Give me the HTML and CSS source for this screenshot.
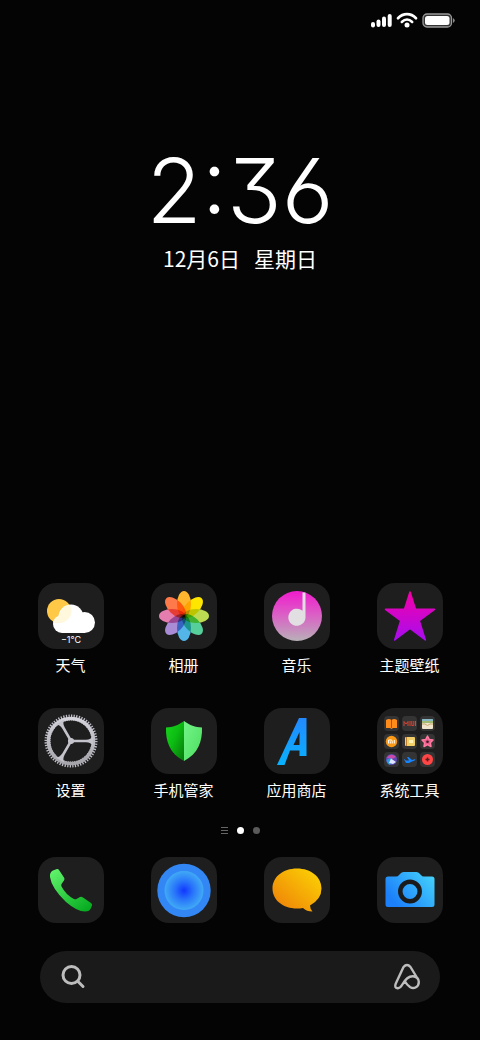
FILE: index.html
```
<!DOCTYPE html>
<html lang="zh-CN">
<head>
<meta charset="utf-8">
<meta name="viewport" content="width=device-width, initial-scale=1">
<title>主屏幕</title>
<link rel="stylesheet" href="styles.css">
</head>
<body>
<div class="screen">
  <header class="status-bar">
    <svg class="status-signal" viewBox="0 0 22 16" aria-hidden="true">
      <rect x="1" y="10" width="4" height="5.500" rx="2"/>
      <rect x="6.500" y="7.500" width="4" height="7.500" rx="2"/>
      <rect x="12" y="4.500" width="4" height="10.500" rx="2"/>
      <rect x="17.700" y="2" width="4" height="13" rx="2"/>
    </svg>
    <svg class="status-wifi" viewBox="0 0 22 16" aria-hidden="true">
      <path d="M2 6.2C7.2 .8 14.8 .8 20 6.2" stroke-width="2.7"/>
      <path d="M5.8 10C9 6.8 13 6.8 16.200 10" stroke-width="2.500"/>
      <circle cx="11" cy="13" r="2.500"/>
    </svg>
    <svg class="status-battery" viewBox="0 0 34 16" aria-hidden="true">
      <rect x="1" y="2" width="28.500" height="13" rx="4" fill="#333" stroke="#999" stroke-width="1.300"/>
      <rect x="3" y="4" width="24.500" height="9" rx="2.500" fill="#fff"/>
      <path d="M31 6q3.500 2.500 0 5z" fill="#888"/>
    </svg>
  </header>

  <main class="home">
    <section class="clock">
      <time class="clock-time">2:36</time>
      <p class="clock-date"><span>12月6日</span><span>星期日</span></p>
    </section>

    <section class="apps">
      <button class="app" type="button">
        <span class="tile">
          <svg viewBox="0 0 66 66" aria-hidden="true">
            <circle cx="21" cy="28" r="12" fill="#ffc847"/>
            <g fill="#fff">
              <circle cx="33" cy="34" r="12.500"/><circle cx="46.500" cy="39.500" r="10.500"/><circle cx="24" cy="41" r="9"/><rect x="24" y="35" width="23" height="15"/>
            </g>
            <path d="M21.600 33Q23 23.500 31.600 21.700A12 12 0 0 1 21.500 40Q18 40 15.200 39.400Q16 34 21.600 33Z" fill="#fff8dc"/>
            <text class="weather-temp" x="33" y="60" text-anchor="middle">−1°C</text>
          </svg>
        </span>
        <span class="app-name">天气</span>
      </button>

      <button class="app" type="button">
        <span class="tile">
          <svg class="petals" viewBox="0 0 66 66" aria-hidden="true">
            <ellipse cx="33" cy="21" rx="7" ry="13" fill="#ffb52d"/>
            <ellipse cx="33" cy="21" rx="7" ry="13" fill="#ffe600" transform="rotate(45 33 33)"/>
            <ellipse cx="33" cy="21" rx="7" ry="13" fill="#bddb52" transform="rotate(90 33 33)"/>
            <ellipse cx="33" cy="21" rx="7" ry="13" fill="#56cf9a" transform="rotate(135 33 33)"/>
            <ellipse cx="33" cy="21" rx="7" ry="13" fill="#53b5e8" transform="rotate(180 33 33)"/>
            <ellipse cx="33" cy="21" rx="7" ry="13" fill="#a98bd6" transform="rotate(225 33 33)"/>
            <ellipse cx="33" cy="21" rx="7" ry="13" fill="#e57eae" transform="rotate(270 33 33)"/>
            <ellipse cx="33" cy="21" rx="7" ry="13" fill="#ff7a4a" transform="rotate(315 33 33)"/>
          </svg>
        </span>
        <span class="app-name">相册</span>
      </button>

      <button class="app" type="button">
        <span class="tile">
          <svg viewBox="0 0 66 66" aria-hidden="true">
            <defs><linearGradient id="music" x1="0" y1="0" x2="0" y2="1"><stop offset=".05" stop-color="#ee22cc"/><stop offset=".5" stop-color="#d963c5"/><stop offset="1" stop-color="#b8b0b8"/></linearGradient></defs>
            <circle cx="33" cy="33" r="25" fill="url(#music)"/>
            <path d="M38.500 9.500h3V34a8.600 8.600 0 1 1-3-6.300z" fill="#e2dfe2"/>
          </svg>
        </span>
        <span class="app-name">音乐</span>
      </button>

      <button class="app" type="button">
        <span class="tile">
          <svg viewBox="0 0 66 66" aria-hidden="true">
            <defs><linearGradient id="star" x1="0" y1="0" x2="0" y2="1"><stop offset="0" stop-color="#f400a8"/><stop offset="1" stop-color="#a80cf0"/></linearGradient></defs>
            <path d="M33 9L38.500 26.300H57.500L42.300 37.600L48.300 57L33 45.500L17.700 57L23.700 37.600L8.500 26.300H27.500Z" fill="url(#star)" stroke="url(#star)" stroke-width="1.500" stroke-linejoin="round"/>
          </svg>
        </span>
        <span class="app-name">主题壁纸</span>
      </button>

      <button class="app" type="button">
        <span class="tile">
          <svg viewBox="0 0 66 66" aria-hidden="true">
            <defs><linearGradient id="gear" x1="0" y1="0" x2="0" y2="1"><stop offset="0" stop-color="#d4d3dc"/><stop offset="1" stop-color="#a5a4aa"/></linearGradient></defs>
            <circle cx="33" cy="33" r="23.500" fill="none" stroke="#bdbcc5" stroke-width="6" pathLength="120" stroke-dasharray="1 1"/>
            <circle cx="33" cy="33" r="22.500" fill="none" stroke="url(#gear)" stroke-width="3.600"/>
            <g fill="#c4c3cb">
              <path d="M33 30.500L36 31.700H48Q53 31.500 55 28V38Q53 34.500 48 34.300H36L33 35.500Z"/>
              <path d="M33 30.500L36 31.700H48Q53 31.500 55 28V38Q53 34.500 48 34.300H36L33 35.500Z" transform="rotate(120 33 33)"/>
              <path d="M33 30.500L36 31.700H48Q53 31.500 55 28V38Q53 34.500 48 34.300H36L33 35.500Z" transform="rotate(240 33 33)"/>
              <circle cx="33" cy="33" r="3"/>
            </g>
          </svg>
        </span>
        <span class="app-name">设置</span>
      </button>

      <button class="app" type="button">
        <span class="tile">
          <svg viewBox="0 0 66 66" aria-hidden="true">
            <defs>
              <linearGradient id="shield-l" x1="0" y1="0" x2="1" y2="1"><stop offset="0" stop-color="#19d51f"/><stop offset=".45" stop-color="#0cbd12"/><stop offset="1" stop-color="#07760b"/></linearGradient>
              <linearGradient id="shield-r" x1="0" y1="0" x2="1" y2="1"><stop offset="0" stop-color="#73f587"/><stop offset="1" stop-color="#4cdd60"/></linearGradient>
            </defs>
            <path d="M33 13C27 17.500 22 19 15 19.500C14.500 33 19 46 33 53Z" fill="url(#shield-l)"/>
            <path d="M33 13C39 17.500 44 19 51 19.500C51.500 33 47 46 33 53Z" fill="url(#shield-r)"/>
          </svg>
        </span>
        <span class="app-name">手机管家</span>
      </button>

      <button class="app" type="button">
        <span class="tile">
          <svg viewBox="0 0 66 66" aria-hidden="true">
            <defs><linearGradient id="store" x1="0" y1="0" x2="0" y2="1"><stop offset="0" stop-color="#2389ff"/><stop offset="1" stop-color="#08b2ff"/></linearGradient></defs>
            <path d="M35 10H42.500V48H35.500V42.500H26L20.500 57H13Z M35.500 24L29.500 37H35.500Z" fill="url(#store)" fill-rule="evenodd"/>
          </svg>
        </span>
        <span class="app-name">应用商店</span>
      </button>

      <button class="app" type="button">
        <span class="tile folder">
          <svg class="mini" viewBox="0 0 15 15" aria-hidden="true">
            <path d="M2 4q3-2 5.500 0q2.500-2 5.500 0v8H9l-1.500 1L6 12H2z" fill="#ff8b1a"/><path d="M7.500 4v8" stroke="#b84e00"/>
          </svg>
          <svg class="mini" viewBox="0 0 15 15" aria-hidden="true">
            <path d="M2 10V5.500L4 8L6 5.500V10M8 5v5M9.800 5v4.500h2V5M13.500 5v5" fill="none" stroke="#d94432" stroke-width="1"/>
          </svg>
          <svg class="mini" viewBox="0 0 15 15" aria-hidden="true">
            <rect x="2" y="3" width="11" height="10" rx="1" fill="#eee5cc"/><path d="M2 4h11" stroke="#67a8c4" stroke-width="1.500"/><path d="M2 6h11" stroke="#88ad54" stroke-width="1.500"/><path d="M2 8h3q2.500 3 5 0h3" fill="none" stroke="#c8a76d"/>
          </svg>
          <svg class="mini" viewBox="0 0 15 15" aria-hidden="true">
            <circle cx="7.500" cy="7.500" r="5.700" fill="#f99a16"/><path d="M4.500 9.500V6h2.500q1.200 0 1.200 1.200v2.300M6.300 7.300v2.200M10.300 6V9.500" fill="none" stroke="#fff"/>
          </svg>
          <svg class="mini" viewBox="0 0 15 15" aria-hidden="true">
            <rect x="3" y="3" width="10" height="9" rx="1" fill="#f1cf69"/><path d="M4.500 3v9" stroke="#bd812d"/><path d="M7 6h4v3H7z" fill="#fff2b8"/>
          </svg>
          <svg class="mini" viewBox="0 0 15 15" aria-hidden="true">
            <path d="M7.500 2L9.200 5.400L13 6L10.300 8.700L11 12.500L7.500 10.700L4 12.500L4.700 8.700L2 6L5.800 5.400Z" fill="#e85b86" stroke="#ff79a0" stroke-width="1.500" stroke-linejoin="round"/><circle cx="7.500" cy="7.700" r="1.300" fill="#352030"/>
          </svg>
          <svg class="mini" viewBox="0 0 15 15" aria-hidden="true">
            <circle cx="7.500" cy="7.500" r="5.500" fill="#5b48b4"/><path d="M2.500 6Q7 0 12 5L8 7Z" fill="#c94aa8"/><path d="M2.500 8Q6 5 8 7L6 13Q3 12 2.500 8Z" fill="#2a9bd8"/><path d="M7 6.500L12 10L9 12L5 11Z" fill="#dfe8ff"/>
          </svg>
          <svg class="mini" viewBox="0 0 15 15" aria-hidden="true">
            <path d="M1.500 6.500L4 8.500H7L5 5H6.500L10 8L13.500 7Q13 9 10 9.500L7 11H4Z" fill="#1684ff"/>
          </svg>
          <svg class="mini" viewBox="0 0 15 15" aria-hidden="true">
            <circle cx="7.500" cy="7.500" r="5.500" fill="#ff4545"/><path d="M7.500 5.500v4M5.500 7.500h4" stroke="#572020" stroke-width="1.500"/>
          </svg>
        </span>
        <span class="app-name">系统工具</span>
      </button>
    </section>

    <nav class="pager" aria-label="页面">
      <button class="page-mark page-feed" type="button" aria-label="负一屏"><svg viewBox="0 0 7 7" aria-hidden="true"><path d="M0 .5h7M0 3.500h7M0 6.500h7"/></svg></button>
      <button class="page-mark page-dot current" type="button" aria-label="第一页" aria-current="page"></button>
      <button class="page-mark page-dot" type="button" aria-label="第二页"></button>
    </nav>
  </main>

  <footer class="bottom">
    <nav class="dock" aria-label="常用应用">
      <button class="app" type="button" aria-label="电话">
        <span class="tile">
          <svg viewBox="0 0 66 66" aria-hidden="true">
            <defs><linearGradient id="phone" x1="0" y1="0" x2=".8" y2="1"><stop offset="0" stop-color="#65f76f"/><stop offset="1" stop-color="#08ad22"/></linearGradient></defs>
            <path d="M15 13.500L19 12Q20.200 11.700 21 13L26 20.500Q27 22 26 23.500L23.500 27Q23 28 23.500 29.500Q28 38 36 42Q37.500 42.500 38.500 42L42 40Q43.500 39.500 45 40.500L53 46Q54.500 47 54 48.500L52.500 52Q51 54.500 47 54.500Q39 54.500 28 45Q13.500 31 12 20Q11.500 15 15 13.500Z" fill="url(#phone)"/>
          </svg>
        </span>
      </button>
      <button class="app" type="button" aria-label="浏览器">
        <span class="tile">
          <svg viewBox="0 0 66 66" aria-hidden="true">
            <defs><radialGradient id="orb"><stop offset="0" stop-color="#1037ff"/><stop offset=".5" stop-color="#2a78fa"/><stop offset="1" stop-color="#41aaf5"/></radialGradient></defs>
            <circle cx="33" cy="33.500" r="26.700" fill="#3387f5"/>
            <circle cx="33" cy="33.500" r="19.500" fill="url(#orb)"/>
          </svg>
        </span>
      </button>
      <button class="app" type="button" aria-label="短信">
        <span class="tile">
          <svg viewBox="0 0 66 66" aria-hidden="true">
            <defs><linearGradient id="chat" x1="0" y1="1" x2="1" y2="0"><stop offset=".1" stop-color="#ef8408"/><stop offset=".9" stop-color="#fbce04"/></linearGradient></defs>
            <path d="M33 11.500C47 11.500 57.500 20 57.500 31.500Q57.500 42 46 48.500Q46 51.500 48.500 54.500Q42.500 54.500 39 51Q36 51.500 33 51.500C19 51.500 8.500 43 8.500 31.500S19 11.500 33 11.500Z" fill="url(#chat)"/>
          </svg>
        </span>
      </button>
      <button class="app" type="button" aria-label="相机">
        <span class="tile">
          <svg viewBox="0 0 66 66" aria-hidden="true">
            <defs><linearGradient id="camera" x1="0" y1=".8" x2="1" y2=".2"><stop offset=".1" stop-color="#1c80fa"/><stop offset="1" stop-color="#43cffb"/></linearGradient></defs>
            <path d="M11 19.500H19Q21 19.500 22 18L23.500 16.500Q24.500 15 26.500 15H39.500Q41.500 15 42.500 16.500L44 18Q45 19.500 47 19.500H55Q57.500 19.500 57.500 22V47.500Q57.500 50 55 50H11Q8.500 50 8.500 47.500V22Q8.500 19.500 11 19.500Z" fill="url(#camera)"/>
            <circle cx="33" cy="34.500" r="9.700" fill="none" stroke="#1b1b1c" stroke-width="4.500"/>
          </svg>
        </span>
      </button>
    </nav>

    <div class="search-bar">
      <button class="search-button" type="button" aria-label="搜索">
        <svg viewBox="0 0 28 28" aria-hidden="true"><circle cx="12.500" cy="12" r="8.500"/><path d="M19 18.500l5 5"/></svg>
      </button>
      <button class="search-button" type="button" aria-label="语音助手">
        <svg class="assistant" viewBox="0 0 28 28" aria-hidden="true"><path d="M2.800 20.500Q1 25 4.500 25.200Q7 25.500 9 22Q14 13 20 13.200Q25.800 14 25.800 19C25.800 24 21 26.500 17 24Q14 22 12 18.500M24.500 15.500L17.500 4Q14 0 10.500 4L2.800 20.500"/></svg>
      </button>
    </div>
  </footer>
</div>
</body>
</html>
```
FILE: styles.css
```
* { box-sizing: border-box; }

body {
  margin: 0;
  background: #040404;
  color: #fff;
  font-family: "Noto Sans CJK SC", sans-serif;
}

button {
  border: 0;
  padding: 0;
  background: none;
  color: inherit;
  font: inherit;
  cursor: pointer;
}

svg { display: block; }

.screen {
  min-height: 100vh;
  display: flex;
  flex-direction: column;
}

.status-bar {
  display: flex;
  justify-content: flex-end;
  gap: 4px;
  padding: 12px 24px 12px;
}

.status-signal, .status-wifi { width: 22px; height: 16px; fill: #fff; }
.status-battery { width: 34px; height: 16px; }
.status-wifi path { fill: none; stroke: #fff; stroke-linecap: round; }

.home {
  flex: 1;
  display: flex;
  flex-direction: column;
}

.clock {
  flex: 1;
  display: flex;
  flex-direction: column;
  align-items: center;
  padding-top: 100px;
}

.clock-time {
  font-family: Inter, sans-serif;
  font-size: 90px;
  font-weight: 280;
  line-height: 102px;
  font-feature-settings: "cv09", "cv03", "ss03";
}

.clock-date {
  display: flex;
  gap: 14px;
  margin: 0;
  font-size: 21px;
  line-height: 32px;
}

.apps, .dock {
  display: grid;
  grid-template-columns: repeat(4, 1fr);
  padding: 0 14px;
}

.apps { row-gap: 32px; }

.app {
  display: flex;
  flex-direction: column;
  align-items: center;
  gap: 5px;
}

.tile {
  width: 66px;
  height: 66px;
  border-radius: 18px;
  background: #1e1e1e;
}

.app-name {
  font-size: 15px;
  line-height: 22px;
}

.weather-temp {
  fill: #fff;
  font-family: Inter, sans-serif;
  font-size: 9px;
}

.petals { isolation: isolate; }
.petals ellipse { mix-blend-mode: multiply; }

.folder {
  display: grid;
  grid-template-columns: repeat(3, 15px);
  gap: 3px;
  place-content: center;
}

.mini {
  width: 15px;
  height: 15px;
  border-radius: 4px;
  background: #343434;
}

.pager {
  display: flex;
  justify-content: center;
  align-items: center;
  gap: 9px;
  padding: 26px 0 23px;
}

.page-mark { width: 7px; height: 7px; }
.page-feed path { stroke: #666; }
.page-dot { border-radius: 50%; background: #5a5a5a; }
.page-dot.current { background: #fff; }

.search-bar {
  display: flex;
  justify-content: space-between;
  align-items: center;
  height: 52px;
  margin: 28px 40px 37px;
  padding: 0 19px;
  border-radius: 26px;
  background: #1a1a1a;
}

.search-button svg {
  width: 28px;
  height: 28px;
  fill: none;
  stroke: #bdbdbd;
  stroke-width: 3;
  stroke-linecap: round;
  stroke-linejoin: round;
}

.search-button .assistant { stroke-width: 2.4; }
```
